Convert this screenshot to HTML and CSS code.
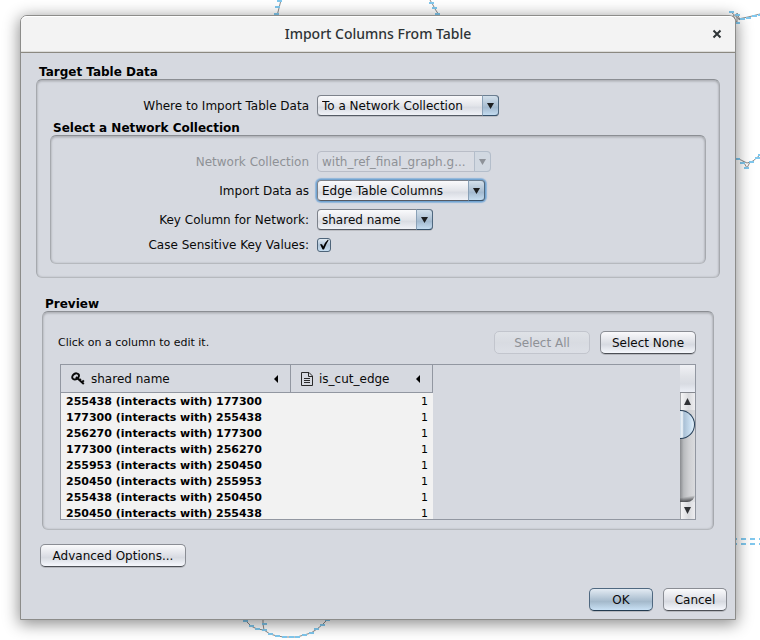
FILE: index.html
```html
<!DOCTYPE html>
<html lang="en">
<head>
<meta charset="utf-8">
<title>Import Columns From Table</title>
<link rel="stylesheet" href="styles.css">
</head>
<body>
<svg class="network" width="760" height="640" aria-hidden="true">
  <g class="edge">
    <path d="M281 0L277 16M430 0L433 5L435 9L439 15M731 12L740 20L737 13L737 23L733 15M738 19L748 17L760 14M735 158L741 160L747 163L753 161L760 155M743 161L747 168L750 162"/>
    <path d="M244 619L251 626L257 629L264 630L270 634L277 636L284 637L297 637L304 635L311 633L317 629L322 625L328 619M263 619V624L264 630"/>
  </g>
  <path class="node" d="M277 1h5M275 7h5M274 14h5M429 3h5M432 8h5M435 14h5M729 12h5M735 15h5M735 23h5M740 19h5M746 18h5M752 16h5M758 15h5M735 159h5M740 163h5M749 162h5M755 158h5M744 168h5M758 155h5M243 621h5M249 626h5M255 629h5M262 630h5M268 634h5M275 636h5M282 637h5M289 637h5M295 637h5M302 635h5M309 633h5M314 629h5M320 625h5M325 620h5M262 624h5"/>
  <path class="link" d="M735 539H760M735 544H760"/>
</svg>

<main class="dialog">
  <header class="titlebar">
    <h1>Import Columns From Table</h1>
    <button class="close" type="button" aria-label="Close">
      <svg width="10" height="10" viewBox="0 0 10 10"><path d="M1.5 1.5l7 7M8.5 1.5l-7 7"/></svg>
    </button>
  </header>

  <form class="content">
    <section>
      <h2>Target Table Data</h2>
      <div class="group target">
        <div class="row">
          <label for="where">Where to Import Table Data</label>
          <span class="combo combo-xl"><select id="where"><option>To a Network Collection</option></select></span>
        </div>
        <section class="nested">
          <h2>Select a Network Collection</h2>
          <div class="group fields">
            <div class="row off">
              <label for="collection">Network Collection</label>
              <span class="combo combo-l"><select id="collection" disabled><option>with_ref_final_graph.g...</option></select></span>
            </div>
            <div class="row">
              <label for="as">Import Data as</label>
              <span class="combo combo-m focused"><select id="as"><option>Edge Table Columns</option></select></span>
            </div>
            <div class="row">
              <label for="key">Key Column for Network:</label>
              <span class="combo combo-s"><select id="key"><option>shared name</option></select></span>
            </div>
            <div class="row">
              <label for="case">Case Sensitive Key Values:</label>
              <span class="check">
                <input id="case" type="checkbox" checked>
                <svg width="14" height="14" viewBox="0 0 14 14"><path d="M3 6.2L5 6.2L6.3 8.6Q8 4.2 11 1.5L11.6 2.2Q9 6 7 11.5H5.6Z"/></svg>
              </span>
            </div>
          </div>
        </section>
      </div>
    </section>

    <section class="preview">
      <h2>Preview</h2>
      <div class="group preview-box">
        <div class="toolbar">
          <p>Click on a column to edit it.</p>
          <button type="button" class="btn wide" disabled>Select All</button>
          <button type="button" class="btn wide">Select None</button>
        </div>
        <div class="pane">
          <div class="viewport">
            <table>
              <colgroup><col class="col-name"><col class="col-flag"></colgroup>
              <thead>
                <tr>
                  <th scope="col"><div class="head">
                    <svg class="key" width="14" height="14" viewBox="0 0 14 14"><ellipse cx="4.6" cy="4.4" rx="3.6" ry="2.7" transform="rotate(-35 4.6 4.4)"/><path d="M5 5L12.8 12M11 10.4L12.8 8.4M8.6 8.2L9.8 6.8"/></svg>
                    <span>shared name</span>
                    <svg class="tri" width="4" height="8" viewBox="0 0 4 8"><path d="M4 0V8L0 4Z"/></svg>
                  </div></th>
                  <th scope="col"><div class="head">
                    <svg class="doc" width="12" height="14" viewBox="0 0 12 14"><path d="M.5 .5H8L11.5 4V13.5H.5ZM7.5 .5V4.5H11.5M3 6.5H9M3 8.5H9M3 10.5H9"/></svg>
                    <span>is_cut_edge</span>
                    <svg class="tri" width="4" height="8" viewBox="0 0 4 8"><path d="M4 0V8L0 4Z"/></svg>
                  </div></th>
                </tr>
              </thead>
              <tbody>
                <tr><td>255438 (interacts with) 177300</td><td>1</td></tr>
                <tr><td>177300 (interacts with) 255438</td><td>1</td></tr>
                <tr><td>256270 (interacts with) 177300</td><td>1</td></tr>
                <tr><td>177300 (interacts with) 256270</td><td>1</td></tr>
                <tr><td>255953 (interacts with) 250450</td><td>1</td></tr>
                <tr><td>250450 (interacts with) 255953</td><td>1</td></tr>
                <tr><td>255438 (interacts with) 250450</td><td>1</td></tr>
                <tr><td>250450 (interacts with) 255438</td><td>1</td></tr>
              </tbody>
            </table>
          </div>
          <div class="scroll">
            <div class="corner"></div>
            <button type="button" class="arrow" aria-label="Scroll up"><svg width="7" height="7" viewBox="0 0 7 7"><path d="M3.5 0L7 7H0Z"/></svg></button>
            <div class="track"><div class="thumb"></div><div class="track-end"></div></div>
            <button type="button" class="arrow" aria-label="Scroll down"><svg width="7" height="7" viewBox="0 0 7 7"><path d="M3.5 7L7 0H0Z"/></svg></button>
          </div>
        </div>
      </div>
    </section>

    <div class="advanced"><button type="button" class="btn">Advanced Options...</button></div>
    <footer>
      <button type="submit" class="btn small primary">OK</button>
      <button type="button" class="btn small">Cancel</button>
    </footer>
  </form>
</main>
</body>
</html>
```

FILE: styles.css
```css
*,
*::before,
*::after {
  box-sizing: border-box;
}

body {
  margin: 0;
  padding: 15px 24px 20px 20px;
  background: #fff;
  color: #0a0a0a;
  font: 12px/14px "DejaVu Sans", sans-serif;
}

h1,
h2,
p {
  margin: 0;
}

/* Graph view behind the dialog */
.network {
  position: absolute;
  top: 0;
  left: 0;
  fill: none;
}

.edge {
  stroke: #8a8a8a;
}

.node {
  stroke: #80c8ee;
  stroke-width: 2;
}

.link {
  stroke: #80c8ee;
  stroke-width: 2;
  stroke-dasharray: 5 4;
  stroke-dashoffset: 3;
}

/* Window */
.dialog {
  position: relative;
  border: 1px solid #8c8c8a;
  border-radius: 7px 7px 0 0;
  background: #d6d9e0;
  box-shadow: 0 3px 16px 1px rgba(0, 0, 0, 0.45);
}

.titlebar {
  display: grid;
  grid-template-columns: 36px 1fr 36px;
  align-items: center;
  height: 37px;
  border-bottom: 1px solid #8b8880;
  border-radius: 6px 6px 0 0;
  background: #f3f3f3;
  box-shadow: inset 0 1px #fff, inset 0 -1px #dcdcda;
}

.titlebar h1 {
  grid-column: 2;
  color: #2e3436;
  font: 500 14px/20px "Noto Sans", sans-serif;
  text-align: center;
}

.close {
  display: flex;
  justify-content: center;
  padding: 0;
  border: 0;
  background: none;
}

.close path {
  fill: none;
  stroke: #2e3436;
  stroke-width: 2;
}

.content {
  padding: 12px 15px 7px;
}

h2 {
  padding-left: 3px;
  color: #000;
  font-size: 12px;
  line-height: 14px;
}

/* Etched group boxes */
.group {
  border: 1px solid #a6a9ae;
  border-top-color: #8b8e93;
  border-bottom-color: #b6b9be;
  border-radius: 6px;
  box-shadow: inset 0 2px 2px rgba(0, 0, 0, 0.12), inset 1px 0 2px rgba(0, 0, 0, 0.08), inset -1px 0 2px rgba(0, 0, 0, 0.1);
}

.target {
  padding: 15px 0 13px;
}

.nested {
  margin: 5px 13px 0;
}

.fields {
  display: grid;
  gap: 8px;
  padding: 15px 0 11px;
}

.row {
  display: grid;
  grid-template-columns: 258px 1fr;
  column-gap: 8px;
  align-items: center;
}

.target > .row {
  grid-template-columns: 272px 1fr;
}

.row label {
  text-align: right;
}

.off label {
  color: #8e9196;
}

/* Combo boxes */
.combo {
  position: relative;
  display: block;
  height: 21px;
}

.combo-xl {
  width: 182px;
}

.combo-l {
  width: 174px;
}

.combo-m {
  width: 168px;
}

.combo-s {
  width: 116px;
}

.combo select {
  display: block;
  width: 100%;
  height: 21px;
  padding: 0 18px 0 4px;
  border: 1px solid #7d828b;
  border-bottom-color: #555b65;
  border-radius: 4px;
  appearance: none;
  background: linear-gradient(#fafafc, #e3e5ea 50%, #d9dce3 60%, #f0f2f7);
  box-shadow: 0 1px rgba(0, 0, 0, 0.12);
  color: #0a0a0a;
  font: inherit;
  opacity: 1;
}

.combo::before {
  content: "";
  position: absolute;
  top: 0;
  right: 0;
  width: 17px;
  height: 21px;
  border: 1px solid #4f687f;
  border-top-color: #6c7f92;
  border-bottom-color: #35506a;
  border-left-color: #8aa1b7;
  border-radius: 0 4px 4px 0;
  background: linear-gradient(#d3e0eb, #adc1d4 50%, #a3bad0 60%, #c4dcf0);
  pointer-events: none;
}

.combo::after {
  content: "";
  position: absolute;
  top: 8px;
  right: 5px;
  width: 7px;
  height: 6px;
  background: #1c1e20;
  clip-path: polygon(0 0, 100% 0, 50% 100%);
  pointer-events: none;
}

.off .combo select {
  border-color: #b9bdc7;
  background: #d9dce3;
  box-shadow: none;
  color: #8e9196;
}

.off .combo::before {
  border-color: #b3bdca;
  background: #d1d8e1;
}

.off .combo::after {
  background: #8e9299;
}

.focused select {
  outline: 0;
  box-shadow: 0 0 0 1px #73a4d1, 0 0 1px 2px #8fb5da;
}

.check {
  position: relative;
  display: block;
  width: 14px;
  height: 14px;
}

.check input {
  display: block;
  width: 14px;
  height: 14px;
  margin: 0;
  border: 1px solid #4e6479;
  border-radius: 3px;
  appearance: none;
  background: linear-gradient(#e2ebf3, #b1c5d8 50%, #c6ddf0);
}

.check svg {
  position: absolute;
  top: 0;
  left: 0;
  pointer-events: none;
}

/* Push buttons */
.btn {
  min-width: 64px;
  height: 23px;
  padding: 0 11px;
  border: 1px solid #8a8d94;
  border-bottom-color: #4c4f55;
  border-radius: 5px;
  background: linear-gradient(#fafafc, #e0e2e8 45%, #d7dae1 60%, #f6f8fd);
  box-shadow: 0 1px rgba(0, 0, 0, 0.15);
  color: #0a0a0a;
  font: inherit;
}

.btn:disabled {
  border-color: #c2c5cd;
  background: linear-gradient(#dfe2e7, #d8dbe1 50%, #dcdfe6);
  box-shadow: none;
  color: #8e9196;
}

.wide {
  width: 96px;
  padding: 0;
}

.small {
  width: 64px;
  padding: 0;
}

.primary {
  border-color: #4f6880;
  border-bottom-color: #233b50;
  background: linear-gradient(#e3ebf3, #b3c5d5 45%, #a4b9cb 60%, #c9e1f5);
}

/* Preview */
.preview {
  margin: 19px 6px 0;
}

.preview-box {
  padding: 19px 17px 9px;
}

.toolbar {
  display: flex;
  gap: 10px;
  align-items: center;
}

.toolbar p {
  flex: 1;
  margin-left: -2px;
  font-size: 11px;
}

.pane {
  display: flex;
  height: 156px;
  margin-top: 10px;
  border: 1px solid #9297a1;
}

.viewport {
  flex: 1;
  overflow: hidden;
}

table {
  border-collapse: separate;
  border-spacing: 0;
  table-layout: fixed;
  width: 372px;
}

.col-name {
  width: 230px;
}

.col-flag {
  width: 142px;
}

th {
  height: 28px;
  padding: 0;
  border-right: 1px solid #9297a1;
  border-bottom: 1px solid #9297a1;
  font-weight: normal;
  text-align: left;
}

.head {
  display: flex;
  align-items: center;
  gap: 6px;
  padding: 0 12px 0 10px;
}

.head span {
  flex: 1;
}

.doc,
.key {
  fill: none;
  stroke: #2a2a2a;
}

.key {
  stroke: #0a0a0a;
  stroke-width: 2;
}

td {
  height: 16px;
  padding: 2px 5px 0;
  background: #f2f2f2;
  color: #000;
  font-size: 11px;
  line-height: 14px;
  white-space: nowrap;
}

td:first-child {
  font-weight: bold;
}

td:last-child {
  text-align: right;
}

/* Scroll bar */
.scroll {
  display: flex;
  flex-direction: column;
  width: 15px;
}

.corner {
  height: 28px;
  border-bottom: 1px solid #85888f;
  background: linear-gradient(#f0f1f5, #dfe1e6 45%, #d8dbe2 70%, #eceff6);
}

.arrow {
  display: flex;
  align-items: center;
  justify-content: center;
  height: 17px;
  padding: 0 1px 0 0;
  border: 0;
  border-left: 1px solid #a5a7ab;
  background: linear-gradient(90deg, #f5f5f6, #d9dadd 55%, #ededf0);
}

.arrow path {
  fill: #303235;
}

.track {
  display: flex;
  flex: 1;
  flex-direction: column;
  justify-content: space-between;
  overflow: hidden;
  background: linear-gradient(90deg, #898b8f, #b9bbbe 25%, #cfd0d3 60%, #dadbde);
}

.thumb {
  height: 29px;
  border: 1px solid #27405a;
  border-left: 0;
  border-radius: 0 15px 15px 0;
  background: linear-gradient(90deg, #c8d8e6, #f2f7fb 15%, #a9c0d5 27%, #c9dff1 75%, #e4f0fa);
}

.track-end {
  height: 8px;
  border-radius: 0 0 12px 0;
  background: linear-gradient(170deg, transparent 35%, #26282b);
  box-shadow: 0 0 0 8px #dfe0e3;
  clip-path: inset(0);
}

.advanced {
  display: flex;
  padding: 14px 4px 0;
}

.advanced .btn {
  min-width: 146px;
}

footer {
  display: flex;
  justify-content: flex-end;
  gap: 10px;
  margin: 21px -7px 1px 0;
}
```
